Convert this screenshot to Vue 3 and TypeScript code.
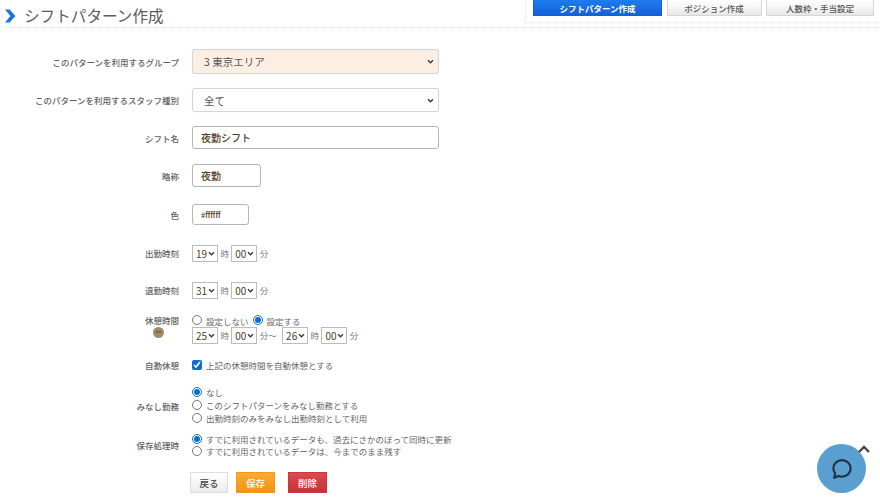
<script setup lang="ts">
const hours = ['19', '25', '26', '31']
const minutes = ['00', '15', '30', '45']
const tabs = [
  { label: 'シフトパターン作成', active: true, width: 129 },
  { label: 'ポジション作成', active: false, width: 95 },
  { label: '人数枠・手当設定', active: false, width: 108 },
]
</script>

<template>
  <div class="page">
    <header class="head">
      <div class="title">
        <svg class="chev" viewBox="0 0 12 14" width="12" height="14" aria-hidden="true">
          <path d="M1 0.5h4.6L11.4 7l-5.8 6.5H1L6.400 7z" fill="#1a73e8" />
        </svg>
        <h1>シフトパターン作成</h1>
      </div>
      <nav class="tabs">
        <a v-for="t in tabs" :key="t.label" class="tab" :class="{ active: t.active }" :style="{ width: t.width + 'px' }">{{ t.label }}</a>
      </nav>
    </header>

    <form class="form" @submit.prevent>
      <div class="row r1">
        <label class="lab">このパターンを利用するグループ</label>
        <select class="sel wide peach"><option>3 東京エリア</option></select>
      </div>
      <div class="row r2">
        <label class="lab">このパターンを利用するスタッフ種別</label>
        <select class="sel wide"><option>全て</option></select>
      </div>
      <div class="row r3">
        <label class="lab">シフト名</label>
        <input class="inp name" value="夜勤シフト" />
      </div>
      <div class="row r4">
        <label class="lab">略称</label>
        <input class="inp short" value="夜勤" />
      </div>
      <div class="row r5">
        <label class="lab">色</label>
        <input class="inp color" value="#ffffff" />
      </div>
      <div class="row r6">
        <label class="lab">出勤時刻</label>
        <div class="time">
          <select class="ts"><option v-for="h in hours" :key="h" :selected="h === '19'">{{ h }}</option></select>
          <span>時</span>
          <select class="ts"><option v-for="m in minutes" :key="m">{{ m }}</option></select>
          <span>分</span>
        </div>
      </div>
      <div class="row r7">
        <label class="lab">退勤時刻</label>
        <div class="time">
          <select class="ts"><option v-for="h in hours" :key="h" :selected="h === '31'">{{ h }}</option></select>
          <span>時</span>
          <select class="ts"><option v-for="m in minutes" :key="m">{{ m }}</option></select>
          <span>分</span>
        </div>
      </div>
      <div class="row r8">
        <div class="lab stack">
          <span>休憩時間</span>
          <span class="help">
            <svg viewBox="0 0 10 10" width="11" height="11" aria-hidden="true"><circle cx="5" cy="5" r="5" fill="#a08a68" /><path d="M2.500 4.500h5" stroke="#5d4f3a" stroke-width="1" /></svg>
          </span>
        </div>
        <div class="col">
          <div class="opt">
            <input type="radio" name="b" />
            <span>設定しない</span>
            <input type="radio" name="b" checked />
            <span>設定する</span>
          </div>
          <div class="time">
            <select class="ts"><option v-for="h in hours" :key="h" :selected="h === '25'">{{ h }}</option></select>
            <span>時</span>
            <select class="ts"><option v-for="m in minutes" :key="m">{{ m }}</option></select>
            <span class="to">分～</span>
            <select class="ts"><option v-for="h in hours" :key="h" :selected="h === '26'">{{ h }}</option></select>
            <span>時</span>
            <select class="ts"><option v-for="m in minutes" :key="m">{{ m }}</option></select>
            <span>分</span>
          </div>
        </div>
      </div>
      <div class="row r9">
        <label class="lab">自動休憩</label>
        <div class="opt"><input type="checkbox" class="chk" checked /><span>上記の休憩時間を自動休憩とする</span></div>
      </div>
      <div class="row r10">
        <label class="lab">みなし勤務</label>
        <div class="col">
          <div class="opt tall"><input type="radio" name="m" checked /><span>なし</span></div>
          <div class="opt tall"><input type="radio" name="m" /><span>このシフトパターンをみなし勤務とする</span></div>
          <div class="opt tall"><input type="radio" name="m" /><span>出勤時刻のみをみなし出勤時刻として利用</span></div>
        </div>
      </div>
      <div class="row r11">
        <label class="lab">保存処理時</label>
        <div class="col">
          <div class="opt"><input type="radio" name="s" checked /><span>すでに利用されているデータも、過去にさかのぼって同時に更新</span></div>
          <div class="opt"><input type="radio" name="s" /><span>すでに利用されているデータは、今までのまま残す</span></div>
        </div>
      </div>
      <div class="actions">
        <button class="btn back" type="button">戻る</button>
        <button class="btn save" type="button">保存</button>
        <button class="btn del" type="button">削除</button>
      </div>
    </form>

    <div class="chat">
      <svg viewBox="0 0 24 24" width="24" height="24" aria-hidden="true">
        <path d="M12 3.200c4.800 0 8.600 3.600 8.600 8.200s-3.800 8.200-8.600 8.200c-1.200 0-2.400-.2-3.400-.7L4.200 20.800l1-4.400c-1.100-1.400-1.800-3.100-1.800-5 0-4.600 3.800-8.200 8.600-8.200z" fill="none" stroke="#1d3447" stroke-width="2.200" stroke-linejoin="round" />
      </svg>
    </div>
    <svg class="top" viewBox="0 0 12 8" width="12" height="8" aria-hidden="true">
      <path d="M1 7l5-5 5 5" fill="none" stroke="#4b4340" stroke-width="2.400" />
    </svg>
  </div>
</template>

<style>
html, body { margin: 0; background: #fff; }
</style>

<style scoped>
.page {
  position: relative;
  width: 880px;
  height: 500px;
  overflow: hidden;
  background: #fff;
  color: #555;
  font-family: "Noto Sans CJK JP", "Noto Sans", sans-serif;
}
.head {
  display: flex;
  justify-content: space-between;
  align-items: flex-start;
  height: 27px;
  margin-left: 4px;
  border-bottom: 1px dotted #e4e4e4;
}
.title { display: flex; align-items: center; gap: 8px; height: 32px; }
.chev { flex: none; }
h1 { margin: 0; font-size: 15.600px; font-weight: 400; color: #5c5c5c; line-height: 1; }
.tabs {
  display: flex;
  gap: 4.500px;
  height: 23px;
  padding: 0 6px 0 7px;
  box-sizing: border-box;
  border-left: 1px dotted #e4e4e4;
  border-bottom: 1px dotted #e4e4e4;
}
.tab {
  display: flex;
  align-items: center;
  justify-content: center;
  height: 16px;
  box-sizing: border-box;
  font-size: 8.500px;
  font-weight: 500;
  color: #555;
  background: linear-gradient(#fff, #e9e9e9);
  border: 1px solid #d6d6d6;
  border-top: 0;
}
.tab.active {
  color: #fff;
  font-weight: 700;
  background: linear-gradient(#1f7cf0, #1560d8);
  border-color: #1560d8;
}
.form { display: flex; flex-direction: column; padding-top: 21px; }
.row { display: flex; align-items: center; }
.lab {
  flex: none;
  width: 179px;
  margin-right: 13px;
  text-align: right;
  font-size: 8.500px;
  font-weight: 500;
  color: #626262;
}
.stack { display: flex; flex-direction: column; align-items: flex-end; gap: 1px; line-height: 12px; margin-top: -6px; }
.help { display: flex; width: 42px; justify-content: center; height: 11px; }
.sel, .ts {
  appearance: none;
  background-repeat: no-repeat;
  background-image: url("data:image/svg+xml,%3Csvg xmlns='http://www.w3.org/2000/svg' viewBox='0 0 8 6'%3E%3Cpath d='M1 1.500l3 3 3-3' fill='none' stroke='%23333' stroke-width='1.500'/%3E%3C/svg%3E");
}
.sel {
  box-sizing: border-box;
  border: 1px solid #d5d5d5;
  border-radius: 3px;
  padding: 0 11px;
  font: inherit;
  font-size: 10.500px;
  color: #555;
  background-color: #fff;
  background-size: 7px 5px;
  background-position: right 4px center;
  box-shadow: 0 0 1px #ddd;
}
.wide { width: 247px; height: 100%; }
.peach { background-color: #fdeee3; }
.inp {
  box-sizing: border-box;
  height: 100%;
  border: 1px solid #b5b5b5;
  border-radius: 3px;
  outline: 0;
  font: inherit;
  font-size: 10px;
  font-weight: 500;
  color: #4f4025;
  padding: 0 8px;
  background: #fff;
}
.name { width: 247px; }
.short { width: 69px; }
.color { width: 57px; font-size: 7.500px; }
.time { display: flex; align-items: center; gap: 2.400px; font-size: 8.500px; color: #777; }
.to { margin-right: 3px; }
.ts {
  width: 26px;
  height: 17px;
  box-sizing: border-box;
  border: 1px solid #bbb;
  border-radius: 0;
  padding: 0 0 0 3px;
  font: inherit;
  font-size: 10px;
  color: #4f4025;
  background-color: #fff;
  background-size: 7px 5px;
  background-position: right 2px center;
}
.col { display: flex; flex-direction: column; }
.opt { display: flex; align-items: center; gap: 4px; font-size: 8.500px; line-height: 12px; color: #666; }
.tall { line-height: 13px; }
.opt input {
  width: 10px;
  height: 10px;
  margin: 0 0 1px;
  accent-color: #0a6ed1;
  flex: none;
}
.r1 { height: 25px; }
.r2 { height: 24px; margin-top: 14px; }
.r3 { height: 23px; margin-top: 14px; }
.r4 { height: 23px; margin-top: 15px; }
.r5 { height: 21px; margin-top: 17px; }
.r6 { height: 18px; margin-top: 19px; }
.r7 { height: 18px; margin-top: 19px; }
.r8 { height: 30px; margin-top: 15px; }
.r9 { height: 14px; margin-top: 14px; }
.r10 { height: 39px; margin-top: 14px; }
.r11 { height: 26px; margin-top: 7px; }
.actions { display: flex; gap: 8px; margin: 14px 0 0 190px; }
.btn {
  width: 38px;
  height: 21px;
  padding: 0;
  border: 1px solid #ddd;
  font: inherit;
  font-size: 9.500px;
  font-weight: 500;
  color: #444;
  background: linear-gradient(#fff, #ececec);
}
.save { width: 39px; color: #fff; border-color: #ef9a1a; background: linear-gradient(#fbab35, #f39313); }
.del { width: 39px; margin-left: 5px; color: #fff; border-color: #c9363c; background: linear-gradient(#dc4a4f, #c3323a); }
.chat {
  position: absolute;
  left: 817px;
  top: 444px;
  width: 49px;
  height: 49px;
  border-radius: 50%;
  background: #5b9fd0;
  display: flex;
  align-items: center;
  justify-content: center;
}
.top { position: absolute; left: 858px; top: 445px; }
</style>
